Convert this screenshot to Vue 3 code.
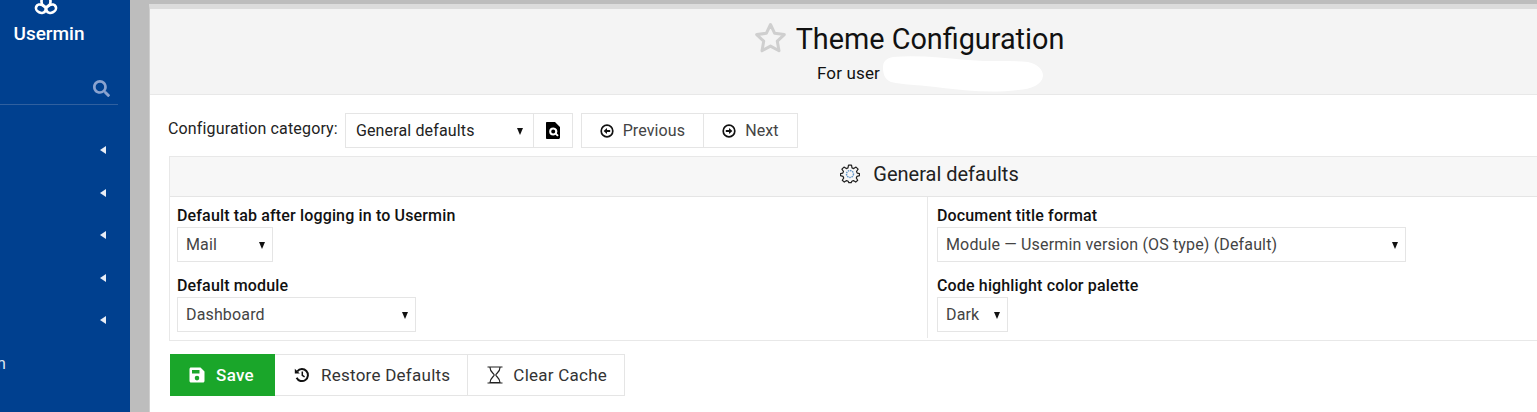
<script setup>
const navRows = [1, 2, 3, 4, 5]
</script>

<template>
  <div class="page">
    <aside class="side">
      <div class="logo">
        <svg class="logo-mark" width="24" height="16" viewBox="0 0 24 16">
          <g fill="none" stroke="#fff" stroke-width="2.700">
            <ellipse cx="12" cy="1.500" rx="4.500" ry="5.500" />
            <ellipse cx="6.800" cy="8.700" rx="5" ry="4" transform="rotate(25 6.800 8.700)" />
            <ellipse cx="17.200" cy="8.700" rx="5" ry="4" transform="rotate(-25 17.200 8.700)" />
          </g>
        </svg>
        <div class="brand">Usermin</div>
      </div>
      <div class="search">
        <svg width="17" height="17" viewBox="0 0 512 512"><path fill="#8ba3cf" d="M505 442.700L405.300 343c-4.500-4.500-10.600-7-17-7H372c27.600-35.300 44-79.700 44-128C416 93.100 322.900 0 208 0S0 93.100 0 208s93.100 208 208 208c48.300 0 92.700-16.400 128-44v16.300c0 6.400 2.500 12.500 7 17l99.700 99.700c9.400 9.400 24.600 9.400 33.900 0l28.300-28.300c9.400-9.400 9.400-24.600.1-34zM208 336c-70.700 0-128-57.200-128-128 0-70.700 57.200-128 128-128 70.700 0 128 57.200 128 128 0 70.700-57.200 128-128 128z"/></svg>
      </div>
      <div class="nav">
        <div v-for="n in navRows" :key="n" class="nav-row"><span class="caret"></span></div>
      </div>
      <div class="cut">n</div>
    </aside>

    <div class="gutter">
      <main class="panel">
        <header class="head">
          <div class="title-row">
            <svg class="star" width="35" height="33" viewBox="0 0 35 33"><path fill="none" stroke="#cfcfcf" stroke-width="3" stroke-linejoin="round" d="M17.500 3.500 L21.700 12.300 L31.300 13.600 L24.300 20.200 L26 29.700 L17.500 25.100 L9 29.700 L10.700 20.200 L3.700 13.600 L13.300 12.300 Z"/></svg>
            <h1>Theme Configuration</h1>
          </div>
          <div class="sub">
            <span>For user</span>
            <svg class="blot" width="160" height="36" viewBox="0 0 160 36"><path fill="#fff" d="M10 1C35 -1 60 2 85 4C105 6 125 4 145 6C155 8 160 14 160 20C159 29 148 33 135 34C110 37 85 35 60 32C40 29 20 29 8 26C1 23 0 17 0 11C0 5 4 2 10 1Z"/></svg>
          </div>
        </header>

        <section class="content">
          <div class="toolbar">
            <label class="cat-label">Configuration category:</label>
            <div class="select cat-select"><span>General defaults</span><i class="arrow"></i></div>
            <button class="btn search-btn">
              <svg width="14" height="17" viewBox="0 0 14 17"><path fill="#000" fill-rule="evenodd" d="M1 0H9L14 5V15.500C14 16.300 13.300 17 12.500 17H1C.4 17 0 16.500 0 16V1C0 .4.400 0 1 0ZM7.200 5.500A4 4 0 1 0 7.200 13.500A4 4 0 0 0 9.500 12.800L11.300 14.600L12.700 13.200L10.900 11.400A4 4 0 0 0 7.200 5.500ZM7.200 7.500A2 2 0 1 1 7.200 11.500A2 2 0 0 1 7.200 7.500Z"/></svg>
            </button>
            <div class="group nav-group">
              <button class="btn prev">
                <svg width="14" height="14" viewBox="0 0 14 14"><circle cx="7" cy="7" r="5.800" fill="none" stroke="#111" stroke-width="1.700"/><path fill="#111" d="M3.600 7L7 4V6H10.200V8H7V10Z"/></svg>
                <span>Previous</span>
              </button>
              <button class="btn next">
                <svg width="14" height="14" viewBox="0 0 14 14"><circle cx="7" cy="7" r="5.800" fill="none" stroke="#111" stroke-width="1.700"/><path fill="#111" d="M10.400 7L7 4V6H3.800V8H7V10Z"/></svg>
                <span>Next</span>
              </button>
            </div>
          </div>

          <div class="card">
            <div class="card-head">
              <svg width="20" height="20" viewBox="0 0 20 20">
                <path fill="none" stroke="#222" stroke-width="1.200" stroke-linejoin="round" d="M8.500 1.500H11.500L12 4.200L13.700 4.900L16 3.400L18.100 5.500L16.500 7.800L17.200 9.400L19.500 10V12L17 12.600L16.300 14.300L17.700 16.500L15.700 18.400L13.400 16.900L11.800 17.600L11.200 19H8.800L8.200 17.600L6.600 16.900L4.300 18.400L2.300 16.500L3.700 14.300L3 12.600L.5 12V10L2.800 9.400L3.500 7.800L1.900 5.500L4 3.400L6.300 4.900L8 4.200Z" transform="translate(0 -.3)"/>
                <circle cx="10" cy="10" r="3.500" fill="none" stroke="#5f93c8" stroke-width="1.400" stroke-dasharray="1.500 .8"/>
              </svg>
              <span>General defaults</span>
            </div>
            <div class="card-body">
              <div class="col col-left">
                <div class="field">
                  <div class="f-label">Default tab after logging in to Usermin</div>
                  <div class="select mail"><span>Mail</span><i class="arrow"></i></div>
                </div>
                <div class="field">
                  <div class="f-label">Default module</div>
                  <div class="select module"><span>Dashboard</span><i class="arrow"></i></div>
                </div>
              </div>
              <div class="col col-right">
                <div class="field">
                  <div class="f-label">Document title format</div>
                  <div class="select format"><span>Module — Usermin version (OS type) (Default)</span><i class="arrow"></i></div>
                </div>
                <div class="field">
                  <div class="f-label">Code highlight color palette</div>
                  <div class="select dark"><span>Dark</span><i class="arrow"></i></div>
                </div>
              </div>
            </div>
          </div>

          <div class="group actions">
            <button class="btn save">
              <svg width="16" height="16" viewBox="0 0 16 16"><path fill="#fff" fill-rule="evenodd" d="M2 0.500H11.500L15.500 4.500V14C15.500 14.800 14.800 15.500 14 15.500H2C1.200 15.500 .5 14.800 .5 14V2C.5 1.200 1.200 .5 2 .5ZM3 3V6.500H10.500V3ZM8 8.800A2.300 2.300 0 1 0 8 13.400A2.300 2.300 0 0 0 8 8.800Z"/></svg>
              <span>Save</span>
            </button>
            <button class="btn act">
              <svg width="16" height="16" viewBox="0 0 16 16"><path fill="none" stroke="#111" stroke-width="2" d="M3.300 4.300A6 6 0 1 1 2.600 10.800"/><path fill="#111" d="M.8 1.800L5.800 6.400H.8Z"/><path fill="none" stroke="#111" stroke-width="1.500" d="M8.300 4.500V8.300L10.600 9.800"/></svg>
              <span>Restore Defaults</span>
            </button>
            <button class="btn act clear">
              <svg width="16" height="18" viewBox="0 0 16 18"><path fill="none" stroke="#222" stroke-width="1.200" d="M.5 1H15.500M.5 17H15.500M3 1.500C3 6 7 7.500 7.200 9C7 10.500 3 12 3 16.500H13C13 12 9 10.500 8.800 9C9 7.500 13 6 13 1.500"/></svg>
              <span>Clear Cache</span>
            </button>
          </div>
        </section>
      </main>
    </div>
  </div>
</template>

<style scoped>
.page {
  display: flex;
  width: 1537px;
  height: 412px;
  overflow: hidden;
  font-family: Roboto, "Liberation Sans", sans-serif;
  font-size: 16px;
  letter-spacing: .15px;
  color: #111;
  background: #fff;
}
.side {
  width: 130px;
  flex: none;
  background: #00408f;
  color: #fff;
}
.logo {
  height: 77px;
  width: 98px;
  display: flex;
  flex-direction: column;
  align-items: center;
}
.logo-mark {
  flex: none;
  margin-left: -7px;
}
.brand {
  margin-top: 8px;
  font-size: 19px;
  letter-spacing: 0;
  font-weight: 500;
  line-height: 20px;
}
.search {
  height: 28px;
  width: 118px;
  border-bottom: 1px solid #30609f;
  display: flex;
  justify-content: flex-end;
  align-items: flex-start;
  padding: 3px 8px 0 0;
  box-sizing: border-box;
}
.nav {
  margin-top: 40px;
}
.nav-row {
  height: 42.500px;
  display: flex;
  justify-content: flex-end;
  padding: 0 24px 0 0;
}
.caret {
  width: 0;
  height: 0;
  margin-top: 1px;
  border-top: 4.500px solid transparent;
  border-bottom: 4.500px solid transparent;
  border-right: 6px solid #e8edf6;
}
.cut {
  margin-top: -4px;
  margin-left: -3px;
  font-size: 16px;
  line-height: 20px;
  color: #dfe6f2;
}
.gutter {
  flex: 1;
  min-width: 0;
  background: #bdbdbd;
  padding: 4px 0 0 19px;
}
.panel {
  width: 1561px;
  height: 100%;
  background: #fff;
  border-top: 5px solid #dcdcdc;
  border-left: 1px solid #cfcfcf;
  box-sizing: border-box;
}
.head {
  height: 86px;
  background: #f4f4f4;
  border-bottom: 1px solid #e8e8e8;
  display: flex;
  flex-direction: column;
  align-items: center;
  box-sizing: border-box;
  padding: 10px 0 0 0;
}
.title-row {
  display: flex;
  align-items: center;
  height: 40px;
}
.star {
  margin-left: -43px;
  margin-right: 8px;
  margin-top: -4px;
}
h1 {
  margin: 0;
  font-size: 28.800px;
  letter-spacing: 0;
  font-weight: 400;
  line-height: 40px;
  color: #111;
}
.sub {
  height: 30px;
  font-size: 17px;
  line-height: 30px;
  display: flex;
  align-items: center;
  gap: 3px;
  margin-top: -1px;
}
.blot {
  flex: none;
  transform: translateY(1px);
}
.content {
  padding: 18px 0 0 19px;
}
.toolbar {
  display: flex;
  align-items: flex-start;
  height: 43px;
}
.cat-label {
  flex: none;
  line-height: 30px;
  margin: 1px 7px 0 -1px;
  color: #222;
}
.select {
  position: relative;
  height: 35px;
  box-sizing: border-box;
  border: 1px solid #e5e5e5;
  background: #fff;
  line-height: 33px;
  padding-left: 8px;
  color: #444;
  flex: none;
}
.arrow {
  position: absolute;
  right: 7px;
  top: 14px;
  width: 0;
  height: 0;
  border-left: 3.500px solid transparent;
  border-right: 3.500px solid transparent;
  border-top: 7px solid #111;
}
.cat-select {
  width: 189px;
  padding-left: 10px;
  color: #222;
}
.cat-select .arrow {
  right: 9.500px;
}
.group {
  display: flex;
}
.btn {
  display: flex;
  align-items: center;
  justify-content: center;
  gap: 9px;
  font-family: inherit;
  font-size: 16px;
  letter-spacing: .1px;
  background: #fff;
  color: #333;
  border: 1px solid #e5e5e5;
  box-sizing: border-box;
  padding: 0;
  height: 35px;
}
.search-btn {
  width: 40px;
  margin-left: -1px;
}
.nav-group {
  margin-left: 8px;
}
.prev,
.next {
  color: #444;
}
.prev {
  width: 123px;
}
.next {
  width: 94px;
  border-left: 0;
}
.card {
  width: 1520px;
  border: 1px solid #e8e8e8;
  border-right: 0;
  box-sizing: border-box;
}
.card-head {
  height: 40px;
  background: #f7f7f7;
  border-bottom: 1px solid #e5e5e5;
  display: flex;
  align-items: center;
  justify-content: center;
  gap: 13px;
  font-size: 20px;
  letter-spacing: 0;
  color: #222;
  box-sizing: border-box;
  padding: 0 0 6px 0;
}
.card-body {
  display: flex;
  height: 143px;
  box-sizing: border-box;
}
.col {
  box-sizing: border-box;
  padding: 9px 0 0 7px;
}
.col-left {
  width: 758px;
  border-right: 1px solid #e8e8e8;
  margin-bottom: 2px;
}
.col-right {
  flex: 1;
  padding-left: 9px;
}
.field {
  height: 70px;
}
.f-label {
  font-weight: 500;
  line-height: 20px;
  margin-bottom: 1px;
  color: #111;
}
.mail { width: 96px; }
.module { width: 239px; }
.format { width: 469px; }
.dark { width: 71px; }
.actions {
  margin: 13px 0 0 1px;
}
.actions .btn {
  height: 42px;
  font-size: 17px;
  letter-spacing: .25px;
}
.actions .save {
  width: 105px;
  background: #1aa62a;
  border-color: #1aa62a;
  color: #fff;
  font-weight: 500;
  gap: 11px;
  padding-right: 2px;
}
.actions .act {
  padding: 0 17px 0 19px;
  border-left: 0;
  gap: 11px;
}
.actions .clear {
  gap: 10px;
}
</style>
